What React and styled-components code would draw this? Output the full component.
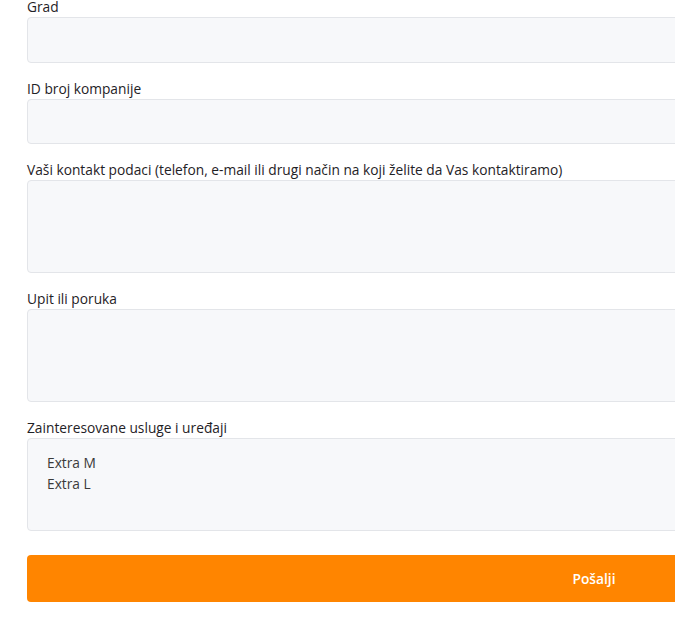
import React from 'react'
import styled, { createGlobalStyle } from 'styled-components'

const GlobalStyle = createGlobalStyle`
  html, body {
    margin: 0;
    padding: 0;
    background: #ffffff;
    overflow: hidden;
  }
  body {
    font-family: "Open Sans", "Noto Sans", sans-serif;
    color: #212529;
  }
`

const Form = styled.form`
  width: 1134px;
  margin: -4px 0 0 27px;
  display: flex;
  flex-direction: column;
`

const Group = styled.div`
  display: flex;
  flex-direction: column;
  margin-bottom: 15px;
`

const Label = styled.label`
  font-size: 13.75px;
  line-height: 21px;
  color: #1f2226;
`

const Field = styled.div`
  box-sizing: border-box;
  height: ${p => p.$height}px;
  background: #f7f8fa;
  border: 1px solid #e3e5e9;
  border-radius: 4px;
  padding: 13px 19px;
  font-size: 13.75px;
  line-height: 21px;
  color: #333;
`

const Option = styled.div`
  font-size: 13.75px;
  line-height: 21px;
  color: #3a3a3a;
`

const Submit = styled.button`
  margin-top: 9px;
  height: 47px;
  border: none;
  border-radius: 4px;
  background: #ff8500;
  color: #fff;
  font-family: "Open Sans", "Noto Sans", sans-serif;
  font-size: 13.75px;
  font-weight: 600;
  cursor: pointer;
`

const fields = [
  { label: 'Grad', height: 45.5 },
  { label: 'ID broj kompanije', height: 45.5 },
  { label: 'Vaši kontakt podaci (telefon, e-mail ili drugi način na koji želite da Vas kontaktiramo)', height: 93 },
  { label: 'Upit ili poruka', height: 93 }
]

const App = () => {
  return (
    <>
      <GlobalStyle />
      <Form onSubmit={e => e.preventDefault()}>
        {fields.map(f => (
          <Group key={f.label}>
            <Label>{f.label}</Label>
            <Field $height={f.height} />
          </Group>
        ))}
        <Group>
          <Label>Zainteresovane usluge i uređaji</Label>
          <Field $height={93}>
            <Option>Extra M</Option>
            <Option>Extra L</Option>
          </Field>
        </Group>
        <Submit type='submit'>Pošalji</Submit>
      </Form>
    </>
  )
}

export default App
